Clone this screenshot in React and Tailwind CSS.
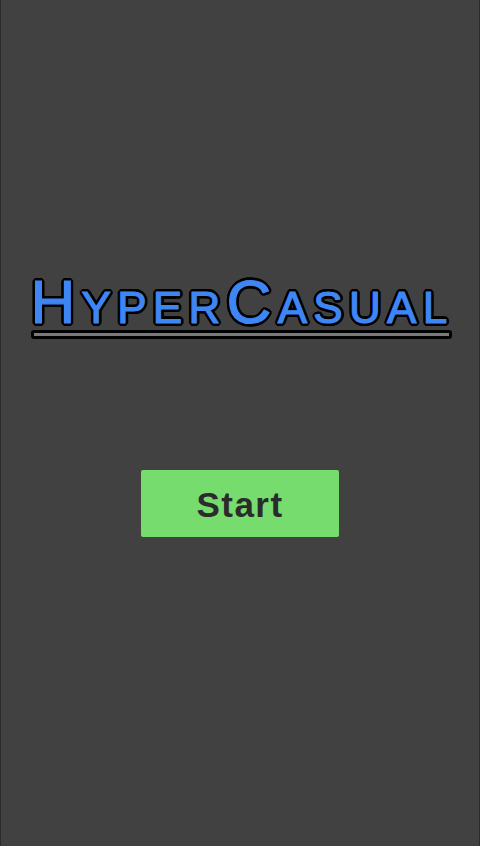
export default function App() {
  const outline =
    "[-webkit-text-stroke:1.2px_#3f86f5] [text-shadow:3px_0_0_#000,-3px_0_0_#000,0_3px_0_#000,0_-3px_0_#000,2.1px_2.1px_0_#000,-2.1px_2.1px_0_#000,2.1px_-2.1px_0_#000,-2.1px_-2.1px_0_#000,2.8px_1.1px_0_#000,-2.8px_1.1px_0_#000,2.8px_-1.1px_0_#000,-2.8px_-1.1px_0_#000,1.1px_2.8px_0_#000,-1.1px_2.8px_0_#000,1.1px_-2.8px_0_#000,-1.1px_-2.8px_0_#000]";

  return (
    <div className="w-[480px] h-[846px] bg-[#414141] border-x border-[#2b2b2b] flex flex-col items-center font-['Liberation_Sans',Arial,sans-serif]">
      {/* Title */}
      <div className="mt-[274px] ml-[4px] flex flex-col items-start">
        <h1 className={`leading-[56px] h-[56px] whitespace-nowrap text-[#3f86f5] tracking-[6.3px] font-normal ${outline}`}>
          <span className="text-[62px]">H</span>
          <span className="text-[44px]">YPER</span>
          <span className="text-[62px]">C</span>
          <span className="text-[44px]">ASUAL</span>
        </h1>
        <div className="w-[421px] h-[9px] rounded-[3px] border-[3px] border-black bg-[#7a7a7a]" />
      </div>

      {/* Start button */}
      <button className="mt-[131px] w-[198px] h-[67px] bg-[#77dc6e] rounded-[2px] text-[#2b2b2b] text-[35px] font-bold tracking-[1.5px] pt-[3px] flex items-center justify-center">
        Start
      </button>
    </div>
  );
}
